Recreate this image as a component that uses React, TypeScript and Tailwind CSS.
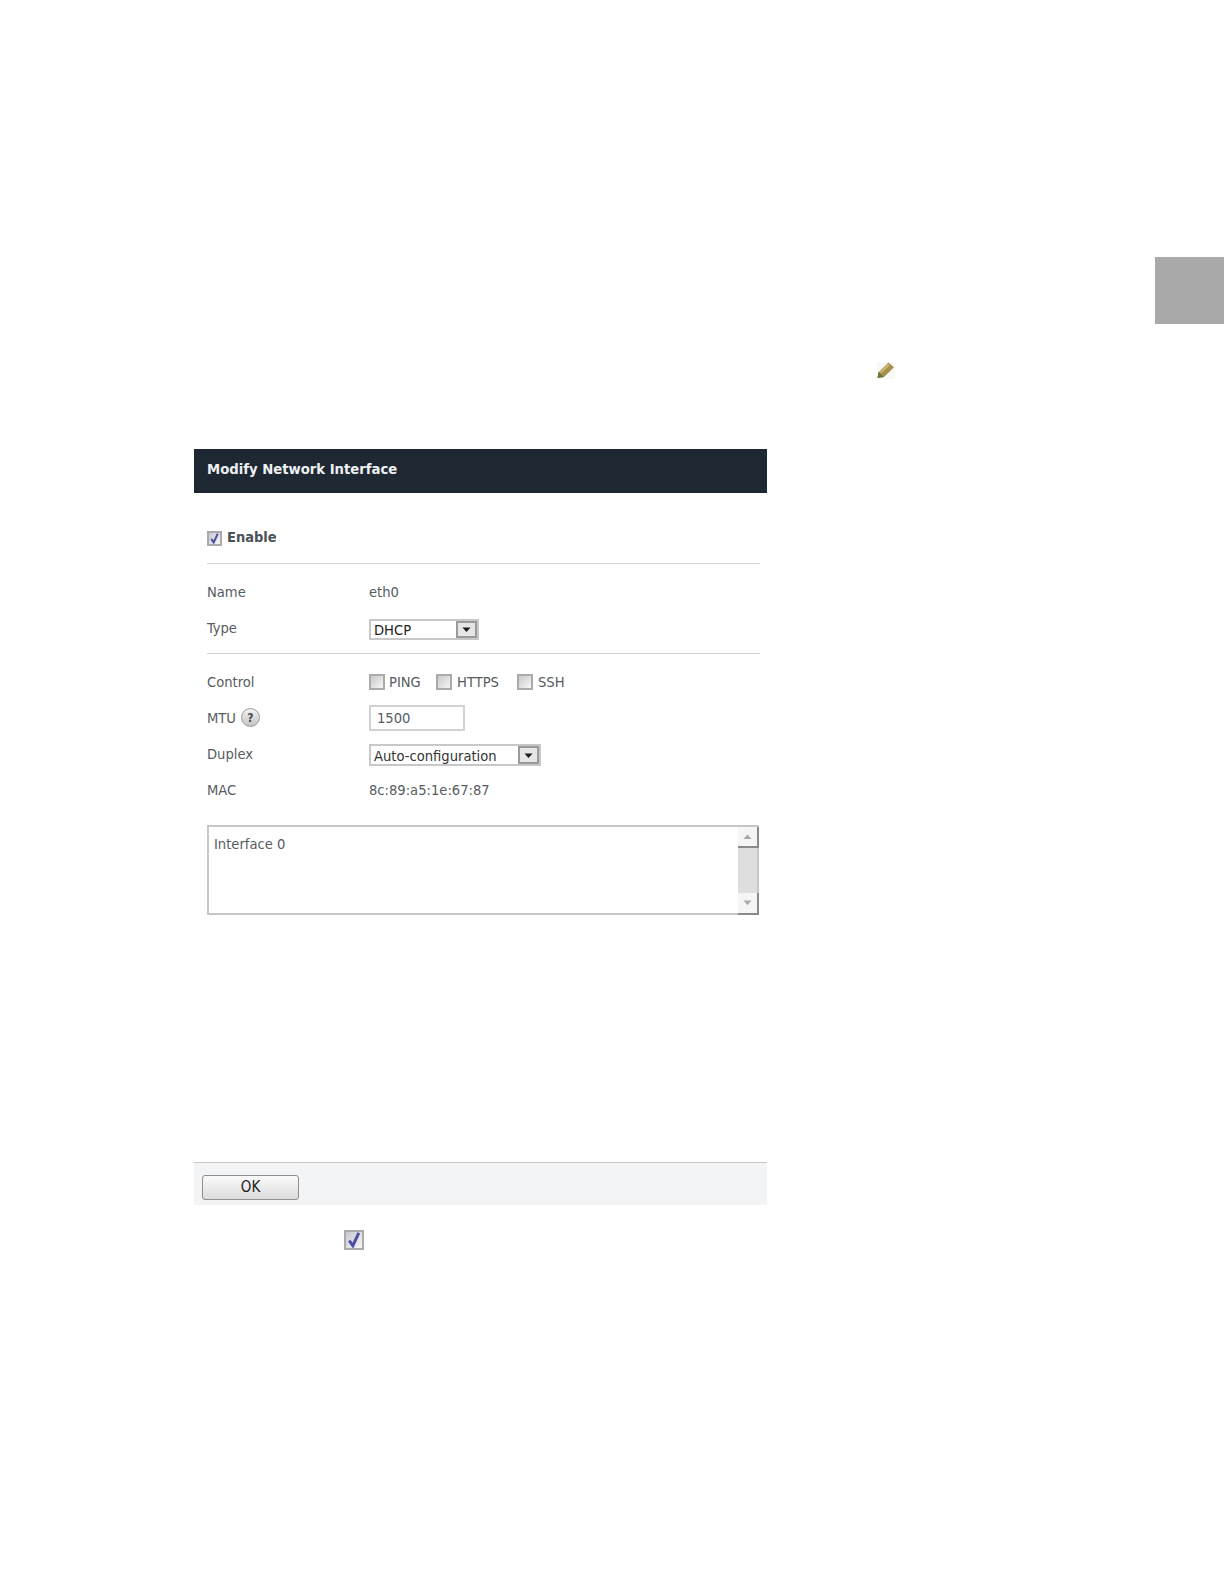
const Check = ({ size, checked = false }: { size: number; checked?: boolean }) => (
  <span
    className="flex shrink-0 items-center justify-center border-2 border-[#aaaaaa] bg-gradient-to-br from-[#c9c9ce] to-[#f6f6f6]"
    style={{ width: size, height: size }}
  >
    {checked && (
      <svg viewBox="1 1 14 14" className="h-full w-full">
        <path d="M3.8 8.5 L7 13 L12.2 1.8" fill="none" stroke="#4a4fa8" strokeWidth="2.6" />
      </svg>
    )}
  </span>
);

const Arrow = () => (
  <span className="flex h-full w-[21px] shrink-0 items-center justify-center border-2 border-[#9a9a9a] bg-[#e6e6e6]">
    <svg viewBox="0 0 10 6" className="mt-[2px] w-[9px]">
      <path d="M0.5 0.5 H9.5 L5 5.5 Z" fill="#1c1c1c" />
    </svg>
  </span>
);

const Row = ({ h, label, children }: { h: string; label: React.ReactNode; children?: React.ReactNode }) => (
  <div className={`grid grid-cols-[162px_1fr] items-center ${h}`}>
    <div className="flex items-center">{label}</div>
    <div className="flex items-center">{children}</div>
  </div>
);

export default function App() {
  return (
    <div className="h-[1584px] w-[1224px] overflow-hidden bg-white font-['DejaVu_Sans',sans-serif] text-[14.6px] text-[#565c61] [font-stretch:condensed]">
      <div className="flex justify-end pt-[257px]">
        <div className="h-[67px] w-[69px] bg-[#a9a9a9]" />
      </div>

      <div className="ml-[876px] mt-[36px] h-[20px] w-[20px]">
        <svg viewBox="0 0 20 20" className="h-full w-full">
          <rect x="1" y="2" width="18" height="17" fill="#f8f8f4" />
          <path d="M1.5 18 L2.5 12.2 L12.5 2.6 L18 7.2 L8 17 Z" fill="#a98f4f" />
          <path d="M1.5 18 L2.5 12.2 L8 17 Z" fill="#66773f" />
          <path d="M4.5 12.5 L13 4.5" stroke="#cfbb7c" strokeWidth="1.8" />
        </svg>
      </div>

      <div className="ml-[194px] mt-[69px] w-[573px]">
        <div className="flex h-[44px] items-center bg-[#1e2833] pb-[4px] pl-[13px] text-[14.7px] font-bold text-[#eef0f2]">
          Modify Network Interface
        </div>

        <div className="h-[669px] pl-[13px] pr-[7px]">
          <div className="flex h-[71px] items-center gap-[5px] border-b border-[#d4d4d4] pt-[22px] text-[14.5px] font-bold text-[#4c5157]">
            <span className="-mt-[2px]">
              <Check size={15} checked />
            </span>
            <span className="-mt-[2px]">Enable</span>
          </div>

          <div className="flex h-[90px] flex-col border-b border-[#d4d4d4] pt-[10px]">
            <Row h="h-[36px]" label="Name">
              <span>eth0</span>
            </Row>
            <Row h="h-[36px]" label={<span>Type</span>}>
              <div className="mt-[2px] flex h-[21px] w-[110px] items-center justify-between border-2 border-[#c8c8c8] pl-[3px] text-[#222]">
                <span className="pt-[2px]">DHCP</span>
                <Arrow />
              </div>
            </Row>
          </div>

          <div className="flex flex-col pt-[10px]">
            <Row h="h-[36px]" label="Control">
              <div className="flex items-center">
                <Check size={16} />
                <span className="ml-[4px] w-[47px]">PING</span>
                <Check size={16} />
                <span className="ml-[5px] w-[60px]">HTTPS</span>
                <Check size={16} />
                <span className="ml-[5px]">SSH</span>
              </div>
            </Row>
            <Row
              h="h-[36px]"
              label={
                <span className="flex items-center gap-[5px]">
                  MTU
                  <span className="flex h-[19px] w-[19px] items-center justify-center rounded-full border border-[#9a9a9a] bg-gradient-to-b from-[#f4f4f4] to-[#c4c4c4] text-[12px] font-bold text-[#4a4a4a]">
                    ?
                  </span>
                </span>
              }
            >
              <div className="flex h-[26px] w-[96px] items-center border-2 border-[#d2d2d2] pl-[6px]">1500</div>
            </Row>
            <Row h="h-[36px]" label={<span>Duplex</span>}>
              <div className="mt-[2px] flex h-[22px] w-[172px] items-center justify-between border-2 border-[#c8c8c8] pl-[3px] text-[#333]">
                <span className="pt-[2px]">Auto-configuration</span>
                <Arrow />
              </div>
            </Row>
            <Row h="h-[36px]" label="MAC">
              <span>8c:89:a5:1e:67:87</span>
            </Row>
          </div>

          <div className="mr-[1px] mt-[17px] flex h-[90px] border-2 border-r-0 border-[#c6c6c6]">
            <div className="flex-1 pl-[5px] pt-[6px]">Interface 0</div>
            <div className="-mb-[2px] flex w-[21px] flex-col">
              <div className="flex h-[21px] items-center justify-center border-b-2 border-r-2 border-[#8a8a8a] bg-[#f5f5f5]">
                <svg viewBox="0 0 10 6" className="w-[9px]"><path d="M0.5 5.5 H9.5 L5 0.5 Z" fill="#a8a8a8" /></svg>
              </div>
              <div className="flex-1 border-r-2 border-[#c6c6c6] bg-[#dedede]" />
              <div className="flex h-[22px] items-center justify-center border-b-2 border-r-2 border-[#8a8a8a] bg-[#f5f5f5]">
                <svg viewBox="0 0 10 6" className="w-[9px]"><path d="M0.5 0.5 H9.5 L5 5.5 Z" fill="#a8a8a8" /></svg>
              </div>
            </div>
          </div>
        </div>

        <div className="flex h-[43px] items-start border-t border-[#c9c9c9] bg-[#f3f4f5] pl-[8px] pt-[12px]">
          <button className="flex h-[25px] w-[97px] items-center justify-center rounded-[3px] border border-[#8e8e8e] bg-gradient-to-b from-[#fafafa] to-[#dcdcdc] text-[15px] text-[#222]">
            OK
          </button>
        </div>

        <div className="ml-[150px] mt-[25px]">
          <Check size={20} checked />
        </div>
      </div>
    </div>
  );
}
